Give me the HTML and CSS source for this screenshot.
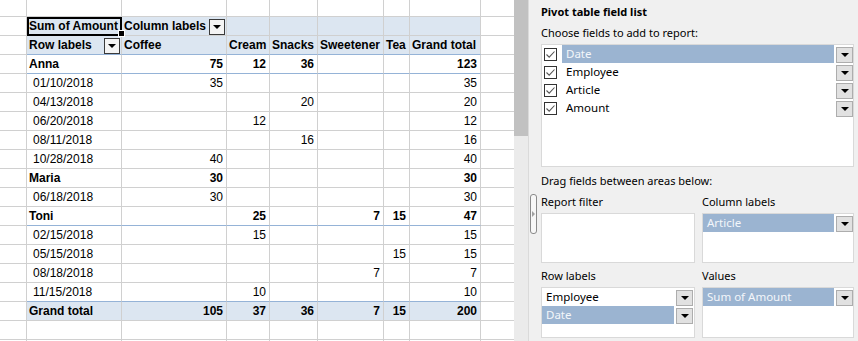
FILE: index.html
```html
<!DOCTYPE html>
<html>
<head>
<meta charset="utf-8">
<link rel="stylesheet" href="styles.css">
</head>
<body>
<div class="app">
  <div class="sheet">
    <div class="r top"><div class="c"></div><div class="c"></div><div class="c"></div><div class="c"></div><div class="c"></div><div class="c"></div><div class="c"></div><div class="c"></div><div class="c"></div></div>
    <div class="r hdr"><div class="c"></div><div class="c b cur">Sum of Amount<span class="handle"></span></div><div class="c b fx"><span>Column labels</span><span class="dd"><span class="tri"></span></span></div><div class="c"></div><div class="c"></div><div class="c"></div><div class="c"></div><div class="c"></div><div class="c"></div></div>
    <div class="r hdr blue"><div class="c"></div><div class="c b fx"><span>Row labels</span><span class="dd"><span class="tri"></span></span></div><div class="c b">Coffee</div><div class="c b">Cream</div><div class="c b">Snacks</div><div class="c b">Sweetener</div><div class="c b">Tea</div><div class="c b">Grand total</div><div class="c"></div></div>
    <div class="r blue"><div class="c"></div><div class="c b">Anna</div><div class="c b n">75</div><div class="c b n">12</div><div class="c b n">36</div><div class="c n"></div><div class="c n"></div><div class="c b n">123</div><div class="c"></div></div>
    <div class="r"><div class="c"></div><div class="c d">01/10/2018</div><div class="c n">35</div><div class="c n"></div><div class="c n"></div><div class="c n"></div><div class="c n"></div><div class="c n">35</div><div class="c"></div></div>
    <div class="r"><div class="c"></div><div class="c d">04/13/2018</div><div class="c n"></div><div class="c n"></div><div class="c n">20</div><div class="c n"></div><div class="c n"></div><div class="c n">20</div><div class="c"></div></div>
    <div class="r"><div class="c"></div><div class="c d">06/20/2018</div><div class="c n"></div><div class="c n">12</div><div class="c n"></div><div class="c n"></div><div class="c n"></div><div class="c n">12</div><div class="c"></div></div>
    <div class="r"><div class="c"></div><div class="c d">08/11/2018</div><div class="c n"></div><div class="c n"></div><div class="c n">16</div><div class="c n"></div><div class="c n"></div><div class="c n">16</div><div class="c"></div></div>
    <div class="r"><div class="c"></div><div class="c d">10/28/2018</div><div class="c n">40</div><div class="c n"></div><div class="c n"></div><div class="c n"></div><div class="c n"></div><div class="c n">40</div><div class="c"></div></div>
    <div class="r"><div class="c"></div><div class="c b">Maria</div><div class="c b n">30</div><div class="c n"></div><div class="c n"></div><div class="c n"></div><div class="c n"></div><div class="c b n">30</div><div class="c"></div></div>
    <div class="r"><div class="c"></div><div class="c d">06/18/2018</div><div class="c n">30</div><div class="c n"></div><div class="c n"></div><div class="c n"></div><div class="c n"></div><div class="c n">30</div><div class="c"></div></div>
    <div class="r blue"><div class="c"></div><div class="c b">Toni</div><div class="c n"></div><div class="c b n">25</div><div class="c n"></div><div class="c b n">7</div><div class="c b n">15</div><div class="c b n">47</div><div class="c"></div></div>
    <div class="r"><div class="c"></div><div class="c d">02/15/2018</div><div class="c n"></div><div class="c n">15</div><div class="c n"></div><div class="c n"></div><div class="c n"></div><div class="c n">15</div><div class="c"></div></div>
    <div class="r"><div class="c"></div><div class="c d">05/15/2018</div><div class="c n"></div><div class="c n"></div><div class="c n"></div><div class="c n"></div><div class="c n">15</div><div class="c n">15</div><div class="c"></div></div>
    <div class="r"><div class="c"></div><div class="c d">08/18/2018</div><div class="c n"></div><div class="c n"></div><div class="c n"></div><div class="c n">7</div><div class="c n"></div><div class="c n">7</div><div class="c"></div></div>
    <div class="r blue"><div class="c"></div><div class="c d">11/15/2018</div><div class="c n"></div><div class="c n">10</div><div class="c n"></div><div class="c n"></div><div class="c n"></div><div class="c n">10</div><div class="c"></div></div>
    <div class="r hdr"><div class="c"></div><div class="c b">Grand total</div><div class="c b n">105</div><div class="c b n">37</div><div class="c b n">36</div><div class="c b n">7</div><div class="c b n">15</div><div class="c b n">200</div><div class="c"></div></div>
    <div class="r"><div class="c"></div><div class="c"></div><div class="c"></div><div class="c"></div><div class="c"></div><div class="c"></div><div class="c"></div><div class="c"></div><div class="c"></div></div>
    <div class="r"><div class="c"></div><div class="c"></div><div class="c"></div><div class="c"></div><div class="c"></div><div class="c"></div><div class="c"></div><div class="c"></div><div class="c"></div></div>
  </div>
  <div class="vs"><div class="thumb"></div></div>
  <div class="panel">
    <div class="grip"><span class="gtri"></span></div>
    <div class="title">Pivot table field list</div>
    <div class="choose">Choose fields to add to report:</div>
    <div class="fbox">
      <div class="item"><span class="chk"><svg width="11" height="11" viewBox="0 0 11 11"><polyline points="1.5,5.5 4.2,8.2 9.5,2.5" fill="none" stroke="#555" stroke-width="1.1"/></svg></span><span class="lbl hi">Date</span><span class="pb"><span class="tri"></span></span></div>
      <div class="item"><span class="chk"><svg width="11" height="11" viewBox="0 0 11 11"><polyline points="1.5,5.5 4.2,8.2 9.5,2.5" fill="none" stroke="#555" stroke-width="1.1"/></svg></span><span class="lbl">Employee</span><span class="pb"><span class="tri"></span></span></div>
      <div class="item"><span class="chk"><svg width="11" height="11" viewBox="0 0 11 11"><polyline points="1.5,5.5 4.2,8.2 9.5,2.5" fill="none" stroke="#555" stroke-width="1.1"/></svg></span><span class="lbl">Article</span><span class="pb"><span class="tri"></span></span></div>
      <div class="item"><span class="chk"><svg width="11" height="11" viewBox="0 0 11 11"><polyline points="1.5,5.5 4.2,8.2 9.5,2.5" fill="none" stroke="#555" stroke-width="1.1"/></svg></span><span class="lbl">Amount</span><span class="pb"><span class="tri"></span></span></div>
    </div>
    <div class="drag">Drag fields between areas below:</div>
    <div class="areas">
      <div class="area">
        <div class="alabel">Report filter</div>
        <div class="abox"></div>
      </div>
      <div class="area">
        <div class="alabel">Column labels</div>
        <div class="abox">
          <div class="item"><span class="lbl hi">Article</span><span class="pb"><span class="tri"></span></span></div>
        </div>
      </div>
      <div class="area">
        <div class="alabel">Row labels</div>
        <div class="abox tall narrow">
          <div class="item"><span class="lbl">Employee</span><span class="pb"><span class="tri"></span></span></div>
          <div class="item"><span class="lbl hi">Date</span><span class="pb"><span class="tri"></span></span></div>
        </div>
      </div>
      <div class="area">
        <div class="alabel">Values</div>
        <div class="abox tall">
          <div class="item"><span class="lbl hi">Sum of Amount</span><span class="pb"><span class="tri"></span></span></div>
        </div>
      </div>
    </div>
  </div>
</div>
</body>
</html>
```

FILE: styles.css
```css
* { box-sizing: border-box; }
html, body { margin: 0; padding: 0; }
body { width: 858px; height: 341px; overflow: hidden; background: #fff; }

.app { display: flex; height: 341px; }

/* spreadsheet */
.sheet {
  width: 514px;
  height: 341px;
  overflow: hidden;
  font: 12px/18px "Liberation Sans", Arial, sans-serif;
  color: #000;
  flex: none;
}
.r {
  display: grid;
  grid-template-columns: 27px 95px 105px 43px 48px 66px 26px 71px 33px;
  height: 19px;
}
.r.top { height: 17px; }
.c {
  border-right: 1px solid #d0d0d0;
  border-bottom: 1px solid #d0d0d0;
  padding: 0 2px;
  white-space: nowrap;
  overflow: hidden;
}
.c:last-child { border-right: none; }
.n { text-align: right; padding-right: 3px; }
.b { font-weight: bold; }
.d { padding-left: 6px; }
.hdr > .c:nth-child(n+2):nth-child(-n+8) { background: #dce6f1; }
.blue > .c:nth-child(n+2):nth-child(-n+8) { border-bottom-color: #95b3d7; }

.fx { display: flex; justify-content: space-between; align-items: flex-start; padding-right: 1px; }
.dd {
  width: 16px;
  height: 16px;
  margin-top: 2px;
  border: 1px solid #3a3a3a;
  background: #f4f4f4;
  display: flex;
  align-items: center;
  justify-content: center;
}
.tri {
  width: 0;
  height: 0;
  border-left: 4px solid transparent;
  border-right: 4px solid transparent;
  border-top: 4px solid #000;
}

.cur { position: relative; overflow: visible; z-index: 2; }
.cur::after {
  content: "";
  position: absolute;
  top: 0;
  left: 0;
  right: -1px;
  bottom: -1px;
  border: 2px solid #000;
}
.handle {
  position: absolute;
  right: -4px;
  bottom: -2px;
  width: 7px;
  height: 7px;
  background: #000;
  border: 1px solid #fff;
  z-index: 3;
}

/* scrollbar */
.vs { width: 14px; flex: none; background: #ebebeb; }
.thumb { height: 136px; background: #c1c1c1; }

/* panel */
.panel {
  position: relative;
  flex: 1;
  background: #f0f0f0;
  border-left: 1px solid #dadada;
  padding: 4px 4px 0 12px;
  font: 11px/16px "Noto Sans", sans-serif;
  color: #000;
}
.grip {
  position: absolute;
  left: 1px;
  top: 194px;
  width: 7px;
  height: 40px;
  border: 1px solid #8a8a8a;
  border-radius: 3px;
  background: #f7f7f7;
  display: flex;
  align-items: center;
  justify-content: center;
}
.gtri {
  width: 0;
  height: 0;
  border-top: 3px solid transparent;
  border-bottom: 3px solid transparent;
  border-left: 3px solid #a0a0a0;
}
.title { font-weight: bold; }
.choose { margin-top: 5px; }
.fbox {
  margin-top: 3px;
  height: 123px;
  background: #fff;
  border: 1px solid #d9d9d9;
}
.item { display: flex; height: 18px; }
.chk {
  width: 13px;
  height: 13px;
  margin: 3px 5px 0 2px;
  border: 1px solid #333;
  background: #fff;
  flex: none;
}
.chk svg { display: block; }
.lbl { flex: 1; padding-left: 4px; line-height: 18px; white-space: nowrap; font-size: 11.5px; }
.lbl.hi { background: #9bb4d1; color: #f3f6fa; }
.pb {
  flex: none;
  width: 17px;
  height: 16px;
  margin: 2px 0 0 2px;
  background: #e1e1e1;
  border: 1px solid #adadad;
  display: flex;
  align-items: center;
  justify-content: center;
}
.drag { margin-top: 6px; }
.areas {
  margin-top: 5px;
  display: grid;
  grid-template-columns: 154px 152px;
  column-gap: 7px;
  row-gap: 5px;
}
.abox {
  margin-top: 3px;
  height: 50px;
  background: #fff;
  border: 1px solid #d9d9d9;
}
.abox.tall { height: 51px; }
.abox.narrow .pb { margin-right: 1px; }
```
